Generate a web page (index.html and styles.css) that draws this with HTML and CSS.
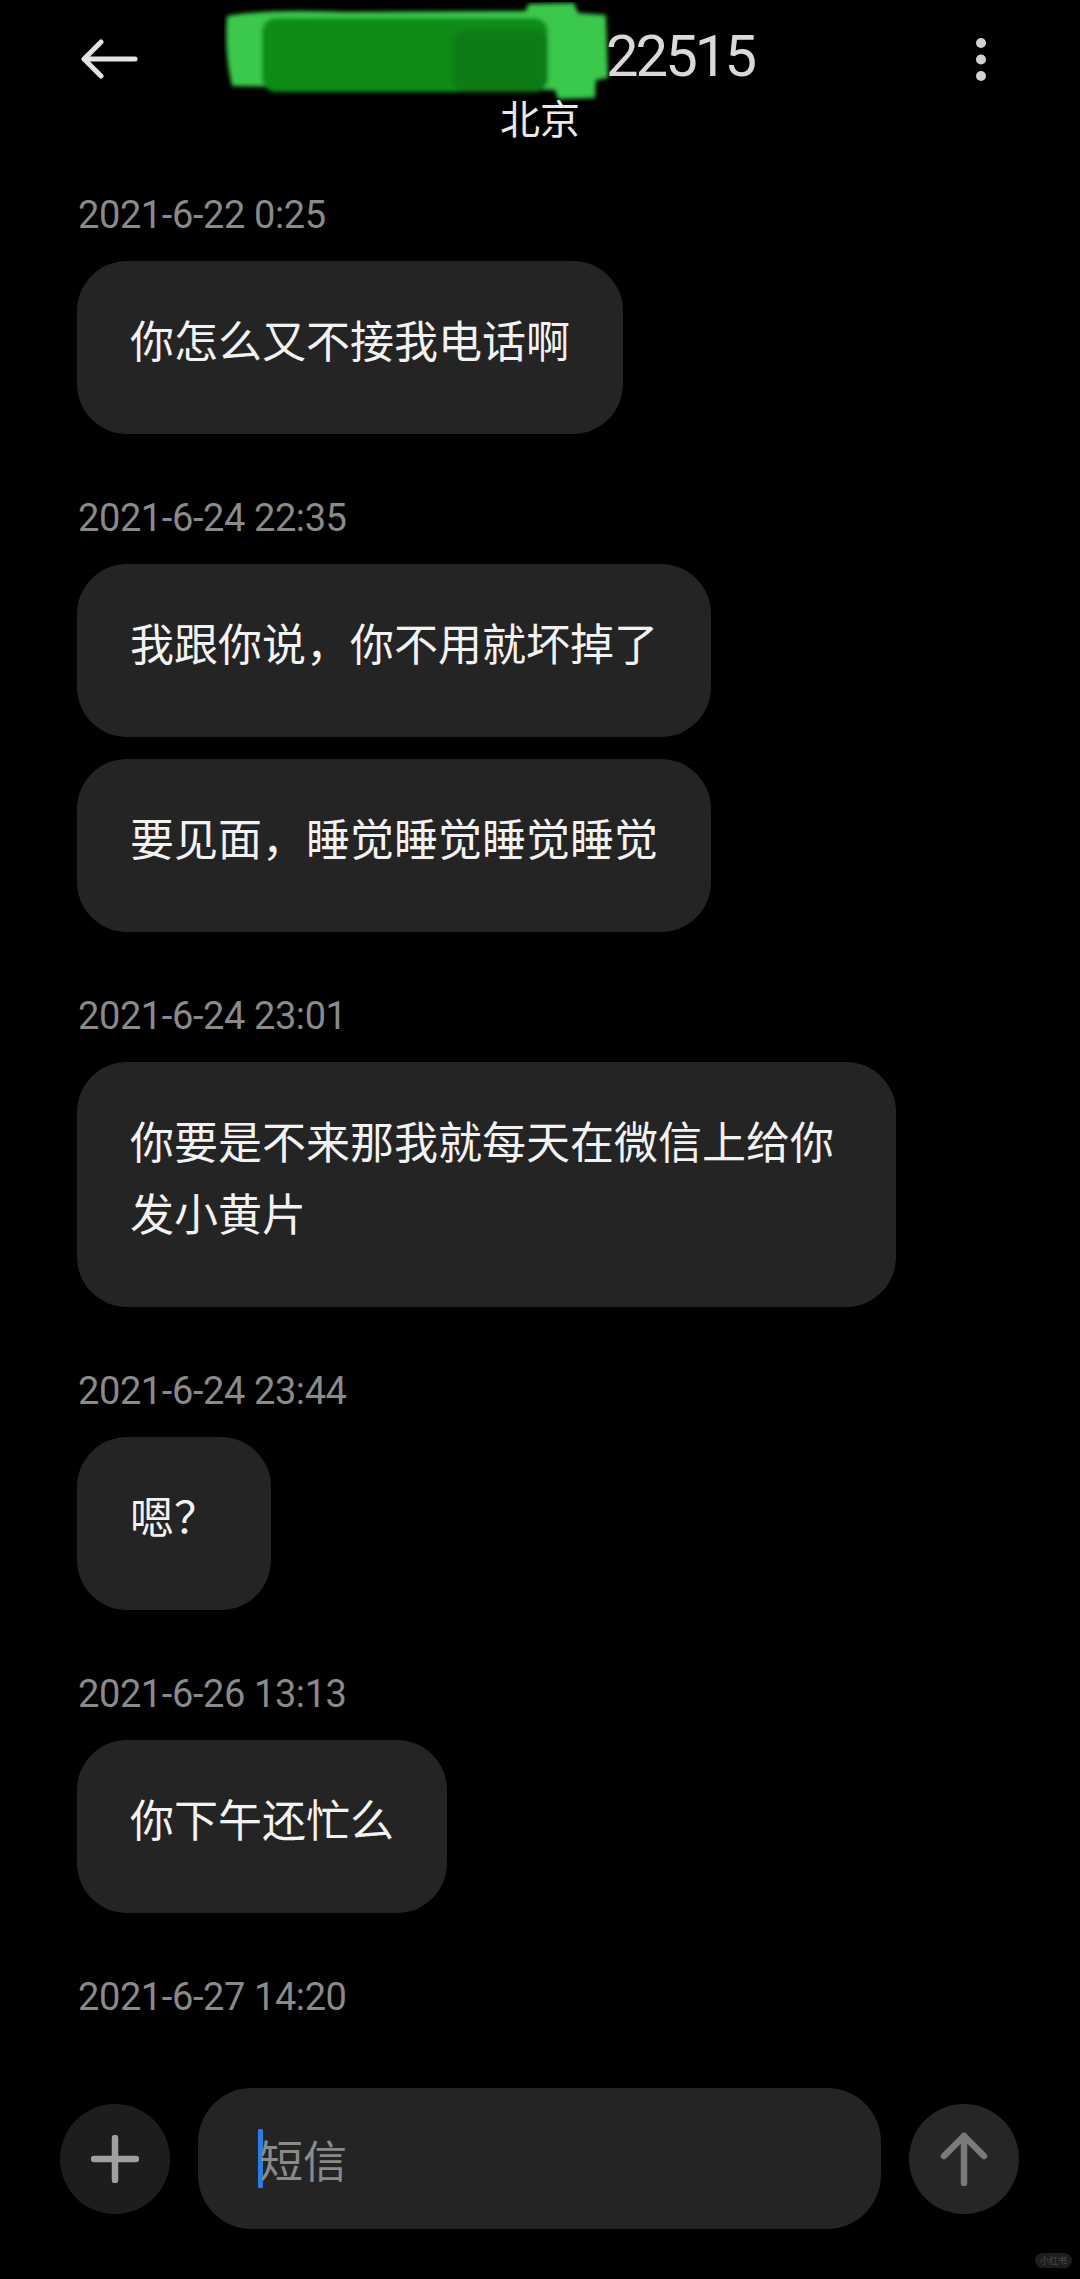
FILE: index.html
```html
<!DOCTYPE html>
<html lang="zh-CN">
<head>
<meta charset="utf-8">
<title>短信</title>
<link rel="stylesheet" href="styles.css">
</head>
<body>
<div class="screen">
  <header class="topbar">
    <div class="back">
      <svg width="58" height="40" viewBox="0 0 58 40"><path d="M55 20 H4 M21 3 L4 20 L21 37" fill="none" stroke="#e4e4e4" stroke-width="5" stroke-linecap="round" stroke-linejoin="round"/></svg>
    </div>
    <div class="title-block">
      <div class="title-row">
        <span class="redacted">
          <svg class="blob" width="392" height="100" viewBox="0 0 392 100">
            <defs><filter id="soft" x="-5%" y="-10%" width="110%" height="120%"><feGaussianBlur stdDeviation="2.2"/></filter></defs>
            <g filter="url(#soft)">
              <path fill="#3bc94c" d="M3 14 Q40 7 120 10 L302 9 L304 2 L350 1 L354 11 L382 13 L384 76 L372 78 L371 96 L334 97 L331 88 L120 86 L8 84 Q0 50 3 14Z"/>
              <rect fill="#0a8c15" x="38" y="16" width="286" height="74" rx="14"/>
              <rect fill="#0b7b19" x="228" y="28" width="96" height="62" rx="14"/>
            </g>
          </svg>
        </span>
        <span class="number">22515</span>
      </div>
      <div class="subtitle">北京</div>
    </div>
    <div class="more">
      <svg width="20" height="44" viewBox="0 0 20 44"><circle cx="10" cy="5" r="5" fill="#d2d2d2"/><circle cx="10" cy="21.5" r="5" fill="#d2d2d2"/><circle cx="10" cy="38" r="5" fill="#d2d2d2"/></svg>
    </div>
  </header>

  <main class="thread">
    <section class="group">
      <div class="stamp">2021-6-22 0:25</div>
      <div class="bubble">你怎么又不接我电话啊</div>
    </section>
    <section class="group">
      <div class="stamp">2021-6-24 22:35</div>
      <div class="bubble">我跟你说，你不用就坏掉了</div>
      <div class="bubble">要见面，睡觉睡觉睡觉睡觉</div>
    </section>
    <section class="group">
      <div class="stamp">2021-6-24 23:01</div>
      <div class="bubble">你要是不来那我就每天在微信上给你发小黄片</div>
    </section>
    <section class="group">
      <div class="stamp">2021-6-24 23:44</div>
      <div class="bubble">嗯？</div>
    </section>
    <section class="group">
      <div class="stamp">2021-6-26 13:13</div>
      <div class="bubble">你下午还忙么</div>
    </section>
    <section class="group">
      <div class="stamp">2021-6-27 14:20</div>
    </section>
  </main>

  <footer class="composer">
    <div class="round plus-btn">
      <svg width="48" height="48" viewBox="0 0 48 48"><path d="M24 3 V45 M3 24 H45" stroke="#a0a0a0" stroke-width="6.5" stroke-linecap="round"/></svg>
    </div>
    <div class="input">
      <span class="caret"></span><span class="placeholder">短信</span>
    </div>
    <div class="round send-btn">
      <svg width="48" height="54" viewBox="0 0 48 54"><path d="M24 51 V4 M4 24 L24 4 L44 24" fill="none" stroke="#7a7a7a" stroke-width="6.5" stroke-linecap="round" stroke-linejoin="round"/></svg>
    </div>
  </footer>

  <div class="watermark">小红书</div>
</div>
</body>
</html>
```

FILE: styles.css
```css
* {
  box-sizing: border-box;
  margin: 0;
  padding: 0;
}

html, body {
  background: #000;
}

body {
  width: 1080px;
  height: 2279px;
  overflow: hidden;
  font-family: Roboto, "Noto Sans CJK SC", sans-serif;
}

.screen {
  position: relative;
  height: 2279px;
  display: flex;
  flex-direction: column;
}

/* header */
.topbar {
  display: grid;
  grid-template-columns: 160px 1fr 160px;
  padding-top: 20px;
  height: 142px;
}

.back {
  padding: 19px 0 0 80px;
}

.back svg, .more svg {
  display: block;
}

.more {
  justify-self: end;
  padding: 18px 89px 0 0;
}

.title-block {
  display: flex;
  flex-direction: column;
  align-items: center;
}

.title-row {
  display: flex;
  height: 72px;
}

.redacted {
  position: relative;
  display: block;
  width: 280px;
  height: 72px;
}

.blob {
  position: absolute;
  left: -102px;
  top: -18px;
}

.number {
  position: relative;
  font-family: Roboto, sans-serif;
  font-size: 58px;
  line-height: 72px;
  letter-spacing: -3px;
  color: #d9d9d9;
}

.subtitle {
  font-family: "Noto Sans CJK SC", sans-serif;
  font-size: 40px;
  line-height: 50px;
  color: #e8e8e8;
}

/* thread */
.thread {
  padding: 48px 0 0 77px;
  display: flex;
  flex-direction: column;
  align-items: flex-start;
}

.group {
  display: flex;
  flex-direction: column;
  align-items: flex-start;
}

.group + .group {
  margin-top: 59px;
}

.stamp {
  font-family: Roboto, sans-serif;
  font-size: 38px;
  line-height: 50px;
  letter-spacing: -0.4px;
  color: #8a8a8a;
  margin-left: 1px;
  margin-bottom: 21px;
}

.bubble {
  background: #242424;
  border-radius: 50px;
  padding: 42px 53px 59px;
  font-family: "Noto Sans CJK SC", sans-serif;
  font-size: 44px;
  line-height: 72px;
  color: #f2f2f2;
  max-width: 819px;
}

.bubble + .bubble {
  margin-top: 22px;
}

/* composer */
.composer {
  margin-top: auto;
  display: flex;
  align-items: center;
  gap: 28px;
  padding: 0 61px 50px 60px;
}

.round {
  flex: none;
  width: 110px;
  height: 110px;
  border-radius: 50%;
  display: flex;
  align-items: center;
  justify-content: center;
}

.plus-btn {
  background: #1d1d1d;
}

.send-btn {
  background: #262626;
}

.input {
  flex: 1;
  height: 141px;
  border-radius: 54px;
  background: #242424;
  display: flex;
  align-items: center;
  padding-left: 60px;
}

.caret {
  width: 5px;
  height: 59px;
  background: #2a7ce6;
  border-radius: 1px;
}

.placeholder {
  font-family: "Noto Sans CJK SC", sans-serif;
  font-size: 44px;
  color: #8a8a8a;
  margin-left: -4px;
}

.watermark {
  position: absolute;
  right: 8px;
  bottom: 11px;
  width: 37px;
  height: 15px;
  border-radius: 8px;
  background: #1e1e1e;
  color: #4a4a4a;
  font-family: "Noto Sans CJK SC", sans-serif;
  font-size: 9px;
  line-height: 15px;
  text-align: center;
}
```
